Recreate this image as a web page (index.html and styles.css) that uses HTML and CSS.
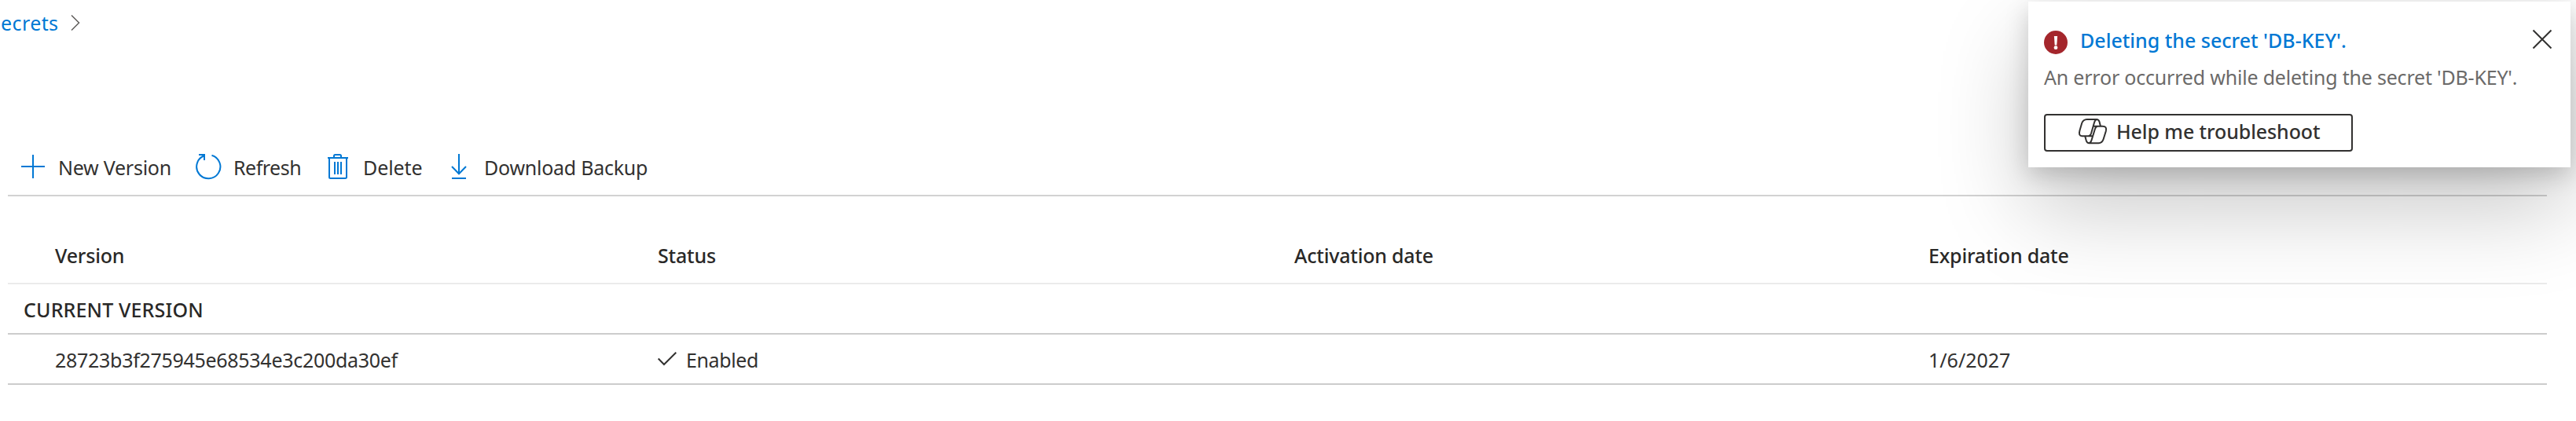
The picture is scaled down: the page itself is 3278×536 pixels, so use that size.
FILE: index.html
```html
<!DOCTYPE html>
<html lang="en">
<head>
<meta charset="utf-8">
<title>Secret versions</title>
<link rel="stylesheet" href="styles.css">
</head>
<body>
<nav class="breadcrumb">
  <a class="crumb">ecrets</a>
  <svg class="chevron" viewBox="0 0 12 20"><path d="M1 .5 10.5 10 1 19.5"/></svg>
</nav>
<main class="content">
  <div class="toolbar">
    <div class="command new"><svg class="icon" viewBox="0 0 32 32"><path d="M1 16H31M16 1V31"/></svg><span class="label">New Version</span></div>
    <div class="command refresh"><svg class="icon" viewBox="0 0 32 32"><path d="M20.5 1.7A15.1 15.1 0 1 1 10.6 2.2M4 1H11V8"/></svg><span class="label">Refresh</span></div>
    <div class="command delete"><svg class="icon" viewBox="0 0 32 32"><path d="M3 5H29M5 5V29.5Q5 31 6.500 31H25Q27 31 27 29.500V5M11 5V2.500Q11 1 12.500 1H18.500Q20 1 20 2.500V5M12 10V26M16 10V26M20 10V26"/></svg><span class="label">Delete</span></div>
    <div class="command download"><svg class="icon" viewBox="0 0 32 32"><path d="M16 0V25M7 16 16 25.200 25 16M7 31H25"/></svg><span class="label">Download Backup</span></div>
  </div>
  <div class="grid">
    <div class="row head">
      <span class="cell version">Version</span><span class="cell status">Status</span><span class="cell activation">Activation date</span><span class="cell expiration">Expiration date</span>
    </div>
    <div class="row group"><span class="group-name">CURRENT VERSION</span></div>
    <div class="row item">
      <span class="cell id">28723b3f275945e68534e3c200da30ef</span>
      <span class="cell state"><svg class="check" viewBox="0 0 24 17"><path d="M.7 8.500 8 16 23.300.8"/></svg><span class="enabled">Enabled</span></span>
      <span class="cell"></span>
      <span class="cell date">1/6/2027</span>
    </div>
  </div>
</main>
<aside class="toast">
  <div class="toast-head">
    <svg class="error-icon" viewBox="0 0 30 30"><circle class="disc" cx="15" cy="15" r="15"/><path class="mark" d="M12.900 7H17.100L16.300 18.500H13.700Z"/><circle class="mark" cx="15" cy="21.700" r="2.400"/></svg>
    <span class="toast-title">Deleting the secret 'DB-KEY'.</span>
    <svg class="close" viewBox="0 0 24 24"><path d="M.5.5 23.500 23.500M23.500.5.5 23.500"/></svg>
  </div>
  <p class="toast-text">An error occurred while deleting the secret 'DB-KEY'.</p>
  <button class="help">
    <svg class="copilot" viewBox="0 0 36 32"><path d="M10.500 1H23Q25.500 1 26.500 4L28 9.700M10.500 1Q6 1.200 4.300 5.500L1.500 15Q-.5 22.300 4.500 22.300H12.500Q15 22 16 19L20 5Q21 1.500 23 1M17.800 9.700H30.500Q36.500 9.700 34.800 16L31.700 26Q30 31.200 25.500 31.200H13.500Q10.800 31.200 9.800 28L8.200 22.300M13.500 31.200Q15.500 30.700 16.500 27.500L21 13Q22 9.700 24.500 9.700M12 22.300H18"/></svg>
    <span class="help-label">Help me troubleshoot</span>
  </button>
</aside>
</body>
</html>
```
FILE: styles.css
```css
* { box-sizing: border-box; }
body {
  margin: 0;
  height: 536px;
  overflow: hidden;
  background: #fff;
  color: #323130;
  font: 25px/34px "Noto Sans", "Open Sans", sans-serif;
}
svg { display: block; flex: none; fill: none; overflow: visible; }

.breadcrumb { display: flex; align-items: center; height: 178px; padding-bottom: 121px; }
.crumb { width: 90px; padding-left: 1px; color: #0078d4; letter-spacing: .4px; }
.chevron { width: 12px; height: 20px; stroke: #605e5c; stroke-width: 1.5; }

.content { margin-left: 10px; width: 3231px; }
.toolbar { display: flex; align-items: center; height: 72px; padding-left: 16px; border-bottom: 2px solid #d2d2d2; }
.command { display: flex; align-items: center; gap: 16px; height: 34px; }
.icon { width: 32px; height: 32px; margin-bottom: 2px; stroke: #0078d4; stroke-width: 2; }
.new { width: 223px; letter-spacing: -.25px; }
.refresh { width: 165px; letter-spacing: -.5px; }
.delete { width: 154px; letter-spacing: -.1px; }
.download { letter-spacing: -.25px; }

.row { display: flex; height: 64px; padding: 15px 0 0 60px; border-bottom: 2px solid #ccc; white-space: nowrap; }
.cell { flex: none; width: 807px; }
.cell:first-child { width: 767px; }
.cell:nth-child(2) { width: 810px; }
.cell:last-child { width: 700px; }
.head { height: 112px; padding-top: 58px; border-color: #ebebeb; color: #292827; font-weight: 500; letter-spacing: -.2px; }
.group { padding-left: 20px; color: #292827; font-weight: 500; letter-spacing: .15px; }
.id { letter-spacing: -.29px; }
.state { display: flex; align-items: center; gap: 12px; height: 34px; }
.check { width: 24px; height: 17px; margin-bottom: 3px; stroke: #323130; stroke-width: 2; }
.enabled { letter-spacing: -.4px; }

.toast {
  position: absolute;
  left: 2581px;
  top: 2px;
  width: 690px;
  height: 211px;
  padding: 32px 24px 20px 20px;
  background: #fff;
  box-shadow: 0 51.2px 115.2px rgba(0,0,0,.22), 0 9.6px 28.8px rgba(0,0,0,.18);
}
.toast-head { display: flex; height: 34px; }
.error-icon { width: 30px; height: 30px; margin: 5px 16px 0 0; }
.disc { fill: #a4262c; }
.mark { fill: #fff; }
.toast-title { flex: 1; color: #0078d4; font-weight: 500; letter-spacing: 0; }
.close { width: 24px; height: 24px; margin-top: 4px; stroke: #323130; stroke-width: 2; }
.toast-text { margin: 13px 0 30px; color: #6b6a69; letter-spacing: -.2px; white-space: nowrap; }
.help {
  display: flex;
  align-items: center;
  width: 393px;
  height: 48px;
  padding: 0 0 4px 42px;
  gap: 12px;
  border: 2px solid #323130;
  border-radius: 4px;
  background: #fff;
  color: #323130;
  font: 500 25px/34px "Noto Sans", "Open Sans", sans-serif;
  letter-spacing: -.1px;
  white-space: nowrap;
}
.copilot { width: 36px; height: 32px; stroke: #323130; stroke-width: 2; }
```
